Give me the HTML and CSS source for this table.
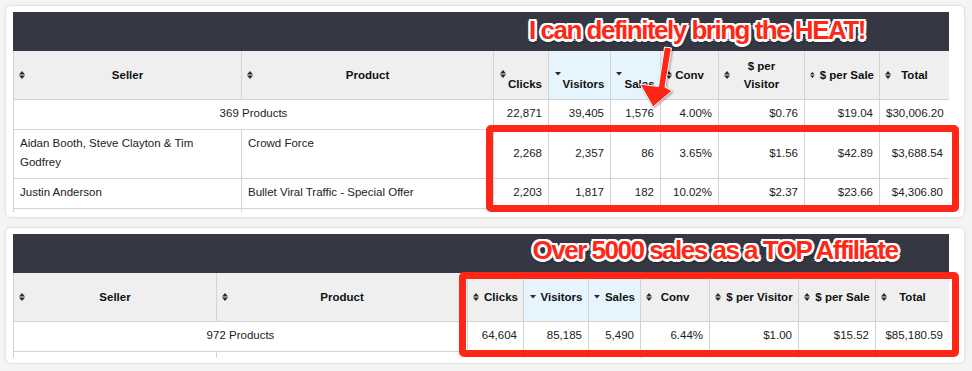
FILE: index.html
```html
<!DOCTYPE html>
<html>
<head>
<meta charset="utf-8">
<link rel="stylesheet" href="styles.css">
</head>
<body>
<section class="card">
  <div class="wrap w1">
    <div class="bar"></div>
    <table class="grid t1">
      <colgroup><col style="width:228px"><col style="width:252px"><col style="width:55px"><col style="width:62px"><col style="width:50px"><col style="width:58px"><col style="width:86px"><col style="width:75px"><col style="width:70px"></colgroup>
      <thead>
        <tr>
          <th><div class="h sp"><svg class="si" viewBox="0 0 6 8"><path d="M0 3.4L3 0L6 3.4ZM0 4.6L3 8L6 4.6Z"/></svg><span>Seller</span></div></th>
          <th><div class="h sp"><svg class="si" viewBox="0 0 6 8"><path d="M0 3.4L3 0L6 3.4ZM0 4.6L3 8L6 4.6Z"/></svg><span>Product</span></div></th>
          <th><div class="h gp lo"><svg class="si" viewBox="0 0 6 8"><path d="M0 3.4L3 0L6 3.4ZM0 4.6L3 8L6 4.6Z"/></svg><span>Clicks</span></div></th>
          <th class="act"><div class="h gp lo"><svg class="dn" viewBox="0 0 6 4"><path d="M0 0L6 0L3 3.6Z"/></svg><span>Visitors</span></div></th>
          <th class="act"><div class="h gp lo"><svg class="dn" viewBox="0 0 6 4"><path d="M0 0L6 0L3 3.6Z"/></svg><span>Sales</span></div></th>
          <th><div class="h sp"><svg class="si" viewBox="0 0 6 8"><path d="M0 3.4L3 0L6 3.4ZM0 4.6L3 8L6 4.6Z"/></svg><span>Conv</span></div></th>
          <th><div class="h sp"><svg class="si" viewBox="0 0 6 8"><path d="M0 3.4L3 0L6 3.4ZM0 4.6L3 8L6 4.6Z"/></svg><span>$ per Visitor</span></div></th>
          <th><div class="h gp"><svg class="si" viewBox="0 0 6 8"><path d="M0 3.4L3 0L6 3.4ZM0 4.6L3 8L6 4.6Z"/></svg><span>$ per Sale</span></div></th>
          <th><div class="h sp"><svg class="si" viewBox="0 0 6 8"><path d="M0 3.4L3 0L6 3.4ZM0 4.6L3 8L6 4.6Z"/></svg><span>Total</span></div></th>
        </tr>
      </thead>
      <tbody>
        <tr>
          <td colspan="2" class="mid">369 Products</td>
          <td class="n">22,871</td><td class="n">39,405</td><td class="n">1,576</td><td class="n">4.00%</td><td class="n">$0.76</td><td class="n">$19.04</td><td class="n">$30,006.20</td>
        </tr>
        <tr>
          <td>Aidan Booth, Steve Clayton &amp; Tim Godfrey</td><td>Crowd Force</td>
          <td class="n">2,268</td><td class="n">2,357</td><td class="n">86</td><td class="n">3.65%</td><td class="n">$1.56</td><td class="n">$42.89</td><td class="n">$3,688.54</td>
        </tr>
        <tr>
          <td>Justin Anderson</td><td>Bullet Viral Traffic - Special Offer</td>
          <td class="n">2,203</td><td class="n">1,817</td><td class="n">182</td><td class="n">10.02%</td><td class="n">$2.37</td><td class="n">$23.66</td><td class="n">$4,306.80</td>
        </tr>
        <tr>
          <td>&nbsp;</td><td>&nbsp;</td><td></td><td></td><td></td><td></td><td></td><td></td><td></td>
        </tr>
      </tbody>
    </table>
  </div>
  <div class="hl hl1"></div>
  <div class="callout c1">I can definitely bring the HEAT!</div>
  <svg class="arrow" viewBox="0 0 40 66"><path d="M28.5 3L35.5 4L29 43L36 47L17 63L4 40L22.5 42.5Z"/></svg>
</section>

<section class="card">
  <div class="wrap w2">
    <div class="bar"></div>
    <table class="grid t2">
      <colgroup><col style="width:203px"><col style="width:251px"><col style="width:56px"><col style="width:65px"><col style="width:52px"><col style="width:69px"><col style="width:89px"><col style="width:77px"><col style="width:74px"></colgroup>
      <thead>
        <tr>
          <th><div class="h sp"><svg class="si" viewBox="0 0 6 8"><path d="M0 3.4L3 0L6 3.4ZM0 4.6L3 8L6 4.6Z"/></svg><span>Seller</span></div></th>
          <th><div class="h sp"><svg class="si" viewBox="0 0 6 8"><path d="M0 3.4L3 0L6 3.4ZM0 4.6L3 8L6 4.6Z"/></svg><span>Product</span></div></th>
          <th><div class="h gp"><svg class="si" viewBox="0 0 6 8"><path d="M0 3.4L3 0L6 3.4ZM0 4.6L3 8L6 4.6Z"/></svg><span>Clicks</span></div></th>
          <th class="act"><div class="h gp"><svg class="dn" viewBox="0 0 6 4"><path d="M0 0L6 0L3 3.6Z"/></svg><span>Visitors</span></div></th>
          <th class="act"><div class="h gp"><svg class="dn" viewBox="0 0 6 4"><path d="M0 0L6 0L3 3.6Z"/></svg><span>Sales</span></div></th>
          <th><div class="h sp"><svg class="si" viewBox="0 0 6 8"><path d="M0 3.4L3 0L6 3.4ZM0 4.6L3 8L6 4.6Z"/></svg><span>Conv</span></div></th>
          <th><div class="h gp"><svg class="si" viewBox="0 0 6 8"><path d="M0 3.4L3 0L6 3.4ZM0 4.6L3 8L6 4.6Z"/></svg><span>$ per Visitor</span></div></th>
          <th><div class="h gp"><svg class="si" viewBox="0 0 6 8"><path d="M0 3.4L3 0L6 3.4ZM0 4.6L3 8L6 4.6Z"/></svg><span>$ per Sale</span></div></th>
          <th><div class="h sp"><svg class="si" viewBox="0 0 6 8"><path d="M0 3.4L3 0L6 3.4ZM0 4.6L3 8L6 4.6Z"/></svg><span>Total</span></div></th>
        </tr>
      </thead>
      <tbody>
        <tr>
          <td colspan="2" class="mid">972 Products</td>
          <td class="n">64,604</td><td class="n">85,185</td><td class="n">5,490</td><td class="n">6.44%</td><td class="n">$1.00</td><td class="n">$15.52</td><td class="n">$85,180.59</td>
        </tr>
        <tr>
          <td>&nbsp;</td><td>&nbsp;</td><td></td><td></td><td></td><td></td><td></td><td></td><td></td>
        </tr>
      </tbody>
    </table>
  </div>
  <div class="hl hl2"></div>
  <div class="callout c2">Over 5000 sales as a TOP Affiliate</div>
</section>
</body>
</html>
```

FILE: styles.css
```css
* { box-sizing: border-box; }

body {
  margin: 0;
  padding: 5px 7px 0 5px;
  background: #f4f4f4;
  font-family: "Liberation Sans", Arial, Helvetica, sans-serif;
  color: #222;
}

.card {
  position: relative;
  width: 960px;
  background: #fff;
  border: 1px solid #e4e4e4;
  border-radius: 6px;
  box-shadow: 0 0 3px rgba(0, 0, 0, 0.06);
  padding: 6px 15px 5px 7px;
}

.card + .card { margin-top: 9px; }

.wrap { overflow: hidden; }
.w1 { height: 200px; }
.w2 { height: 124px; }

.bar {
  height: 39px;
  background: #353743;
}

.grid {
  border-collapse: collapse;
  table-layout: fixed;
  width: 936px;
  font-size: 11.5px;
}

.grid th,
.grid td {
  border: 1px solid #d3d3d3;
}

.grid tr:first-child th { border-top: 0; }

.grid th {
  background: #efefef;
  color: #111;
  font-weight: bold;
  padding: 6px 5px;
  line-height: 18px;
  vertical-align: middle;
}

.grid th.act { background: #e6f4fd; }

.h { min-height: 36px; align-items: center; }

.h.sp {
  display: grid;
  grid-template-columns: 6px minmax(0, 1fr) 6px;
  column-gap: 4px;
}
.h.sp span { text-align: center; justify-self: center; }

.h.gp {
  display: flex;
  justify-content: center;
  gap: 5px;
}
.h.gp span { white-space: nowrap; }

.h.lo { gap: 2px; }
.h.lo span { padding-top: 17px; }
.h.lo svg { align-self: flex-start; margin-top: 13px; }

.si { width: 6px; height: 8px; fill: #2a2a2a; }
.dn { width: 6px; height: 4px; fill: #2a2a2a; }
.h.lo .dn { margin-top: 15px; }

.grid td {
  padding: 4px 6px 6px;
  line-height: 19px;
  vertical-align: top;
  background: #fff;
}

.grid td.n { text-align: right; vertical-align: middle; }
.grid td.mid { text-align: center; vertical-align: middle; }

.hl {
  position: absolute;
  border: 7px solid #ff2616;
  border-radius: 5px;
}
.hl1 { left: 480px; top: 119px; width: 473px; height: 87px; }
.hl2 { left: 453px; top: 44px; width: 500px; height: 85px; }

.callout {
  position: absolute;
  width: 400px;
  text-align: center;
  white-space: nowrap;
  font-family: "Liberation Sans", Arial, sans-serif;
  font-weight: bold;
  font-size: 26px;
  line-height: 26px;
  letter-spacing: -1.5px;
  color: #ff2616;
  text-shadow:
    2.5px 0 0 #fff, -2.5px 0 0 #fff, 0 2.5px 0 #fff, 0 -2.5px 0 #fff,
    1.8px 1.8px 0 #fff, -1.8px 1.8px 0 #fff, 1.8px -1.8px 0 #fff, -1.8px -1.8px 0 #fff,
    1px 3px 3px rgba(0, 0, 0, 0.6);
}
.c1 { left: 491px; top: 11px; }
.c2 { left: 509px; top: 9px; }

.arrow {
  position: absolute;
  left: 630px;
  top: 38px;
  width: 40px;
  height: 66px;
  overflow: visible;
  filter: drop-shadow(1px 1px 1px rgba(0, 0, 0, 0.35));
}
.arrow path {
  fill: #ff2616;
  stroke: #fff;
  stroke-width: 1;
  stroke-linejoin: round;
}
```
